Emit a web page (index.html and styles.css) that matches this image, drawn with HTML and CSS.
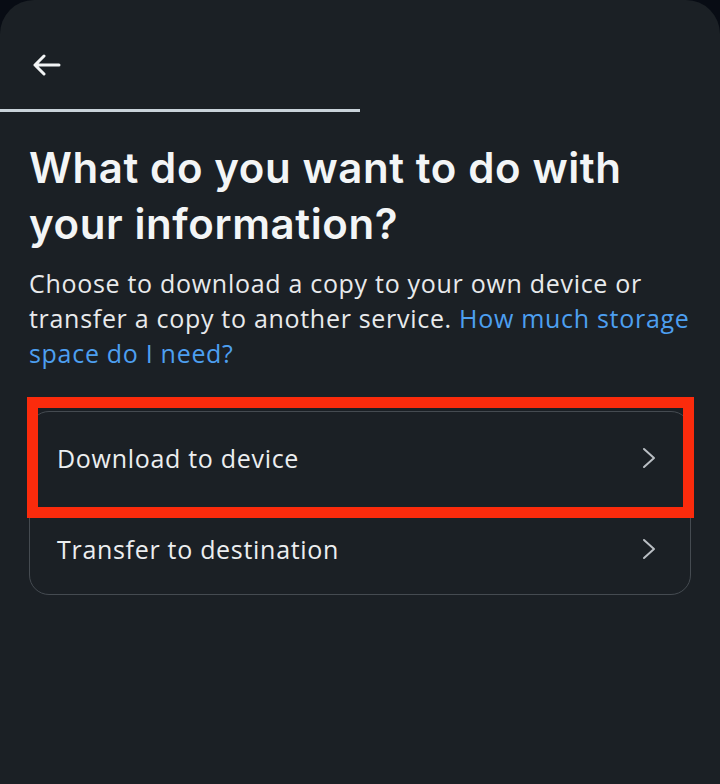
FILE: index.html
```html
<!DOCTYPE html>
<html lang="en">
<head>
<meta charset="utf-8">
<title>Download your information</title>
<link rel="stylesheet" href="styles.css">
</head>
<body>
<div class="panel">
  <header class="header">
    <svg class="back" width="30" height="22" viewBox="0 0 30 22" aria-label="Back">
      <path d="M28 11H4M13 2L4 11L13 20" fill="none" stroke="#f2f4f5" stroke-width="3" stroke-linecap="round" stroke-linejoin="round"/>
    </svg>
  </header>
  <div class="progress"></div>
  <main class="content">
    <h1 class="title">What do you want to do with your information?</h1>
    <p class="desc">Choose to download a copy to your own device or transfer a copy to another service. <a class="link" href="#">How much storage space do I need?</a></p>
    <div class="card-wrap">
      <div class="card">
        <div class="row">
          <span class="row-label">Download to device</span>
          <svg class="chev" width="14" height="22" viewBox="0 0 14 22"><path d="M2 2L12 11L2 20" fill="none" stroke="#b9bec3" stroke-width="2" stroke-linecap="round" stroke-linejoin="round"/></svg>
        </div>
        <div class="row">
          <span class="row-label">Transfer to destination</span>
          <svg class="chev" width="14" height="22" viewBox="0 0 14 22"><path d="M2 2L12 11L2 20" fill="none" stroke="#b9bec3" stroke-width="2" stroke-linecap="round" stroke-linejoin="round"/></svg>
        </div>
      </div>
      <div class="highlight"></div>
    </div>
  </main>
</div>
</body>
</html>
```

FILE: styles.css
```css
html, body {
  margin: 0;
  padding: 0;
  background: #080c14;
  height: 100%;
}
body {
  font-family: "Open Sans", Roboto, "Liberation Sans", sans-serif;
  color: #eceef0;
}
.panel {
  background: #1b2025;
  min-height: 784px;
  border-radius: 34px 34px 0 0;
  overflow: hidden;
}
.header {
  height: 109px;
  box-sizing: border-box;
  padding: 54px 0 0 31px;
}
.back {
  display: block;
}
.progress {
  width: 360px;
  height: 3px;
  background: #c9d3da;
}
.content {
  padding: 0 29px 0 29px;
}
.title {
  margin: 28px 0 0;
  font-family: Inter, "Noto Sans", sans-serif;
  font-weight: 600;
  font-size: 42px;
  line-height: 56px;
  color: #f3f5f6;
  letter-spacing: 0.6px;
}
.desc {
  margin: 14px -12px 0 0;
  font-size: 25px;
  line-height: 35px;
  letter-spacing: 0.7px;
  color: #e8eaec;
}
.link {
  color: #4d9ff0;
  text-decoration: none;
}
.card-wrap {
  position: relative;
  margin-top: 40px;
}
.card {
  border: 1.5px solid #454b51;
  border-radius: 20px;
  overflow: hidden;
}
.row {
  height: 91px;
  display: flex;
  align-items: center;
  justify-content: space-between;
  padding: 0 34px 0 27px;
}
.row-label {
  font-size: 25px;
  letter-spacing: 0.7px;
  color: #eceef0;
}
.chev {
  display: block;
}
.highlight {
  position: absolute;
  left: -2px;
  right: -3px;
  top: -14px;
  height: 121px;
  box-sizing: border-box;
  border: 11px solid #fb2b0c;
}
```
